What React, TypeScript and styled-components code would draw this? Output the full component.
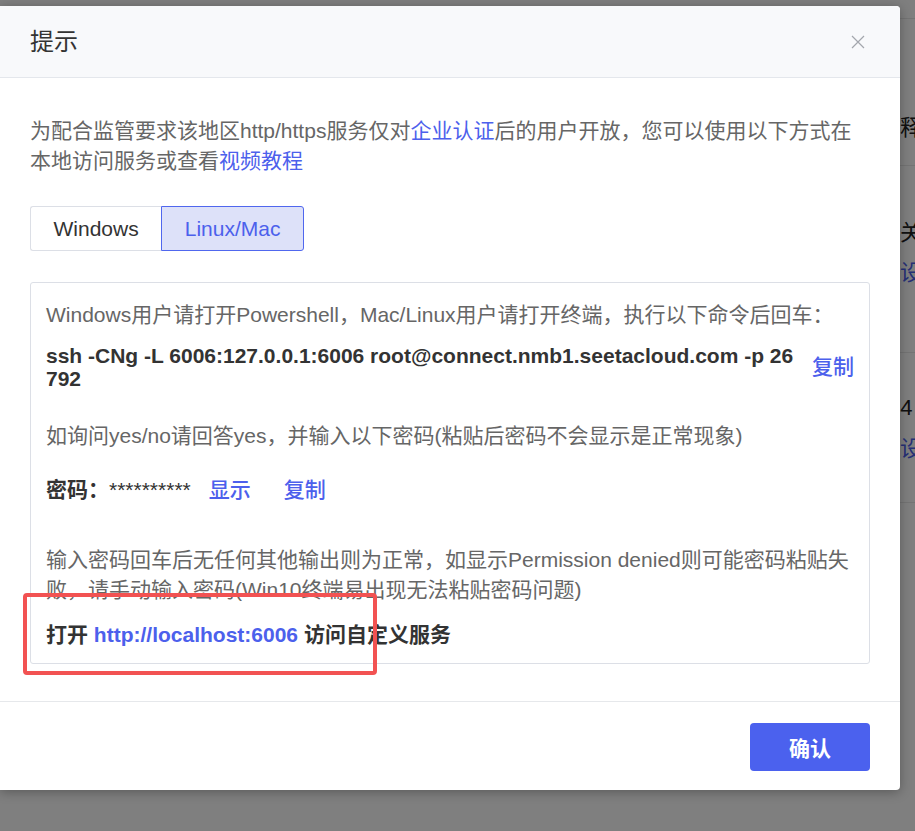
import React from "react";
import styled, { createGlobalStyle } from "styled-components";

const FONT = `"Liberation Sans", Arial, "Noto Sans CJK SC", sans-serif`;
const BLUE = "#4c60ec";

const GlobalStyle = createGlobalStyle`
  html, body { margin: 0; padding: 0; }
  body { background: #ffffff; font-family: ${FONT}; }
  * { box-sizing: border-box; }
`;

const Screen = styled.div`
  position: relative;
  width: 915px;
  height: 831px;
  overflow: hidden;
  background: #ffffff;
`;

/* underlying page (mostly hidden by the dialog) */
const BehindPage = styled.div`
  display: flex;
  flex-direction: column;
  width: 915px;
  font-family: ${FONT};
`;

const BehindRow = styled.div<{ $h: number; $pt: number }>`
  height: ${(p) => p.$h}px;
  padding: ${(p) => p.$pt}px 0 0 900px;
  border-bottom: 1px solid #e8e8e8;
  display: flex;
  flex-direction: column;
  white-space: nowrap;
`;

const BehindText = styled.span<{ $blue?: boolean; $shift?: number; $mt?: number }>`
  font-size: 22px;
  line-height: 22px;
  color: ${(p) => (p.$blue ? BLUE : "#222")};
  margin-left: ${(p) => p.$shift ?? 0}px;
  margin-top: ${(p) => p.$mt ?? 0}px;
`;

const Mask = styled.div`
  position: absolute;
  inset: 0;
  background: rgba(0, 0, 0, 0.5);
`;

const Dialog = styled.div`
  position: absolute;
  left: 0;
  top: 6px;
  width: 900px;
  background: #ffffff;
  border-radius: 0 4px 4px 0;
  box-shadow: 0 2px 12px rgba(0, 0, 0, 0.3);
  font-family: ${FONT};
  display: flex;
  flex-direction: column;
`;

const Header = styled.div`
  height: 72px;
  display: flex;
  align-items: center;
  justify-content: space-between;
  padding: 0 35px 0 30px;
  background: #f8f9fb;
  border-bottom: 1px solid #e4e7ec;
  border-radius: 0 4px 0 0;
`;

const Title = styled.span`
  font-size: 24px;
  color: #333333;
  line-height: 30px;
`;

const CloseBtn = styled.button`
  width: 14px;
  height: 14px;
  padding: 0;
  border: none;
  background: transparent;
  display: flex;
  align-items: center;
  justify-content: center;
  cursor: pointer;
`;

const Body = styled.div`
  padding: 38px 30px 37px;
`;

const Intro = styled.p`
  margin: 0;
  font-size: 21px;
  line-height: 30px;
  color: #666666;
`;

const Link = styled.a<{ $weight?: number }>`
  color: ${BLUE};
  text-decoration: none;
  font-weight: ${(p) => p.$weight ?? 400};
  cursor: pointer;
`;

const Tabs = styled.div`
  display: flex;
  margin-top: 30px;
`;

const Tab = styled.button<{ $active?: boolean; $first?: boolean }>`
  height: 45px;
  padding: 0 22.5px;
  font-family: ${FONT};
  font-size: 21px;
  cursor: pointer;
  color: ${(p) => (p.$active ? BLUE : "#333333")};
  background: ${(p) => (p.$active ? "#dde1f9" : "#ffffff")};
  border: 1px solid ${(p) => (p.$active ? "#5067ee" : "#dcdfe6")};
  border-right-width: ${(p) => (p.$first ? 0 : 1)}px;
  border-radius: ${(p) => (p.$first ? "3px 0 0 3px" : "0 3px 3px 0")};
`;

const Panel = styled.div`
  margin-top: 31px;
  border: 1px solid #dcdfe6;
  border-radius: 3px;
  padding: 17px 15px 13px;
`;

const Line = styled.p<{ $mt?: number }>`
  margin: ${(p) => p.$mt ?? 0}px 0 0;
  font-size: 21px;
  line-height: 30px;
  color: #666666;
`;

const CmdRow = styled.div`
  margin-top: 14px;
  display: flex;
  align-items: center;
`;

const Cmd = styled.div`
  flex: 1;
  font-size: 21px;
  line-height: 23px;
  font-weight: 700;
  color: #333333;
  word-break: break-all;
`;

const CopyLink = styled(Link)<{ $ml: number }>`
  flex: none;
  margin-left: ${(p) => p.$ml}px;
  font-size: 21px;
  line-height: 30px;
  font-weight: 500;
`;

const PwdRow = styled.div`
  margin-top: 24px;
  display: flex;
  align-items: center;
  font-size: 21px;
  line-height: 30px;
`;

const Strong = styled.span`
  font-weight: 700;
  color: #333333;
`;

const Stars = styled.span`
  color: #333333;
`;

const OpenLine = styled.div`
  margin-top: 15px;
  font-size: 21px;
  line-height: 30px;
  font-weight: 700;
  color: #333333;
`;

const Footer = styled.div`
  border-top: 1px solid #e6e8eb;
  padding: 21px 30px 19px;
  display: flex;
  justify-content: flex-end;
`;

const ConfirmBtn = styled.button`
  width: 120px;
  height: 48px;
  border: none;
  border-radius: 4px;
  background: #4b61ee;
  color: #ffffff;
  font-family: ${FONT};
  font-size: 21px;
  font-weight: 700;
  cursor: pointer;
`;

const Annotation = styled.div`
  position: absolute;
  left: 23px;
  top: 587px;
  width: 354px;
  height: 82px;
  border: 4px solid #f25252;
  border-radius: 4px;
  pointer-events: none;
`;

export default function App() {
  return (
    <>
      <GlobalStyle />
      <Screen>
        <BehindPage>
          <BehindRow $h={19} $pt={0} />
          <BehindRow $h={147} $pt={98}>
            <BehindText>释</BehindText>
          </BehindRow>
          <BehindRow $h={187} $pt={56}>
            <BehindText>关</BehindText>
            <BehindText $blue $mt={18}>设</BehindText>
          </BehindRow>
          <BehindRow $h={150} $pt={44}>
            <BehindText $shift={-12}>14</BehindText>
            <BehindText $blue $mt={19}>设</BehindText>
          </BehindRow>
        </BehindPage>
        <Mask />
        <Dialog>
          <Header>
            <Title>提示</Title>
            <CloseBtn aria-label="关闭">
              <svg width="14" height="14" viewBox="0 0 14 14">
                <path d="M1 1 L13 13 M13 1 L1 13" stroke="#a3a6ad" strokeWidth="1.2" fill="none" />
              </svg>
            </CloseBtn>
          </Header>
          <Body>
            <Intro>
              为配合监管要求该地区http/https服务仅对<Link>企业认证</Link>后的用户开放，您可以使用以下方式在本地访问服务或查看<Link>视频教程</Link>
            </Intro>
            <Tabs>
              <Tab $first>Windows</Tab>
              <Tab $active>Linux/Mac</Tab>
            </Tabs>
            <Panel>
              <Line>Windows用户请打开Powershell，Mac/Linux用户请打开终端，执行以下命令后回车：</Line>
              <CmdRow>
                <Cmd>ssh -CNg -L 6006:127.0.0.1:6006 root@connect.nmb1.seetacloud.com -p 26792</Cmd>
                <CopyLink $ml={11}>复制</CopyLink>
              </CmdRow>
              <Line $mt={31}>如询问yes/no请回答yes，并输入以下密码(粘贴后密码不会显示是正常现象)</Line>
              <PwdRow>
                <Strong>密码：</Strong>
                <Stars>**********</Stars>
                <CopyLink $ml={18}>显示</CopyLink>
                <CopyLink $ml={33}>复制</CopyLink>
              </PwdRow>
              <Line $mt={40}>
                输入密码回车后无任何其他输出则为正常，如显示Permission denied则可能密码粘贴失败，请手动输入密码(Win10终端易出现无法粘贴密码问题)
              </Line>
              <OpenLine>
                打开 <Link $weight={700}>http://localhost:6006</Link> 访问自定义服务
              </OpenLine>
            </Panel>
          </Body>
          <Footer>
            <ConfirmBtn>确认</ConfirmBtn>
          </Footer>
          <Annotation />
        </Dialog>
      </Screen>
    </>
  );
}
